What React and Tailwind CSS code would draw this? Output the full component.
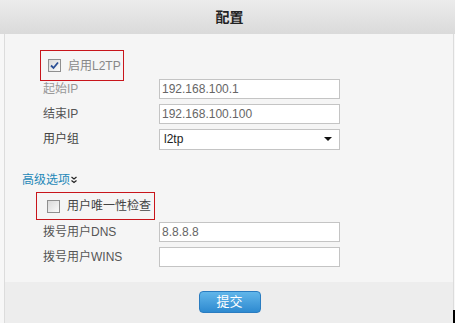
const font = { fontFamily: '"Liberation Sans", "Noto Sans CJK SC", sans-serif' };

function Box({ checked }) {
  return (
    <span className="relative flex h-[13px] w-[13px] shrink-0 items-center justify-center border border-[#8f8f8f] bg-linear-to-br from-[#d9d9d9] to-[#fbfbfb]">
      {checked && (
        <svg width="9" height="9" viewBox="0 0 9 9">
          <path d="M1 4.5 L3.5 7 L8 1.5" fill="none" stroke="#2b4f96" strokeWidth="1.8" />
        </svg>
      )}
    </span>
  );
}

function Row({ label, value, labelColor, children }) {
  return (
    <div className="flex h-[20px] items-center">
      <span className={`ml-[38px] w-[116px] text-[12px] ${labelColor}`}>{label}</span>
      {children || (
        <div className="flex h-[20px] w-[181px] items-center border border-[#c4c4c4] bg-white pl-[2px] text-[12px] text-[#666]">
          {value}
        </div>
      )}
    </div>
  );
}

export default function App() {
  return (
    <div className="relative flex h-[323px] w-[455px] flex-col bg-[#f7f7f7]" style={font}>
      <div className="flex h-[34px] items-center justify-center bg-linear-to-b from-[#ececec] to-[#dadada] pl-[4px]">
        <span className="text-[14px] font-bold text-[#222]">配置</span>
      </div>
      <div className="ml-[4px] mr-[1px] flex flex-1 flex-col border-x border-[#dcdcdc]">
        <div className="flex flex-1 flex-col bg-[#f5f5f5] pt-[16px]">
          <div className="ml-[35px] flex h-[31px] w-[84px] items-center gap-[7px] border border-[#c8151b] pl-[7px]">
            <Box checked />
            <span className="text-[12px] text-[#888]">启用L2TP</span>
          </div>
          <div className="-mt-[2px] flex flex-col gap-[5px]">
            <Row label="起始IP" value="192.168.100.1" labelColor="text-[#999]" />
            <Row label="结束IP" value="192.168.100.100" labelColor="text-[#555]" />
            <Row label="用户组" labelColor="text-[#444]">
              <div className="flex h-[21px] w-[181px] items-center justify-between border border-[#c4c4c4] bg-white pl-[4px] pr-[7px] text-[12px] text-[#222]">
                <span>l2tp</span>
                <span className="h-0 w-0 border-x-[4px] border-t-[4px] border-x-transparent border-t-[#111]" />
              </div>
            </Row>
          </div>
          <div className="ml-[17px] mt-[24px] flex items-center text-[12px] leading-[14px] text-[#1e88b8]">
            高级选项
            <svg width="6" height="8" viewBox="0 0 6 8" className="ml-[1px]">
              <path d="M0.5 1 L3 3 L5.5 1 M0.5 4.5 L3 6.5 L5.5 4.5" fill="none" stroke="#222" strokeWidth="1.2" />
            </svg>
          </div>
          <div className="ml-[31px] mt-[5px] flex h-[28px] w-[119px] items-center gap-[7px] border border-[#c8151b] pl-[10px]">
            <Box />
            <span className="text-[12px] text-[#444]">用户唯一性检查</span>
          </div>
          <div className="mt-[2px] flex flex-col gap-[5px]">
            <Row label="拨号用户DNS" value="8.8.8.8" labelColor="text-[#555]" />
            <Row label="拨号用户WINS" value="" labelColor="text-[#555]" />
          </div>
        </div>
        <div className="flex h-[41px] justify-center bg-[#ededed] pl-[1px] pt-[9px]">
          <button className="h-[22px] w-[62px] rounded-[4px] border border-[#2a7cc0] bg-linear-to-b from-[#61b6ea] to-[#2d8ad0] text-[13px] text-white">
            提交
          </button>
        </div>
      </div>
      <div className="absolute bottom-0 right-0 h-[13px] w-[2px] bg-black" />
    </div>
  );
}
